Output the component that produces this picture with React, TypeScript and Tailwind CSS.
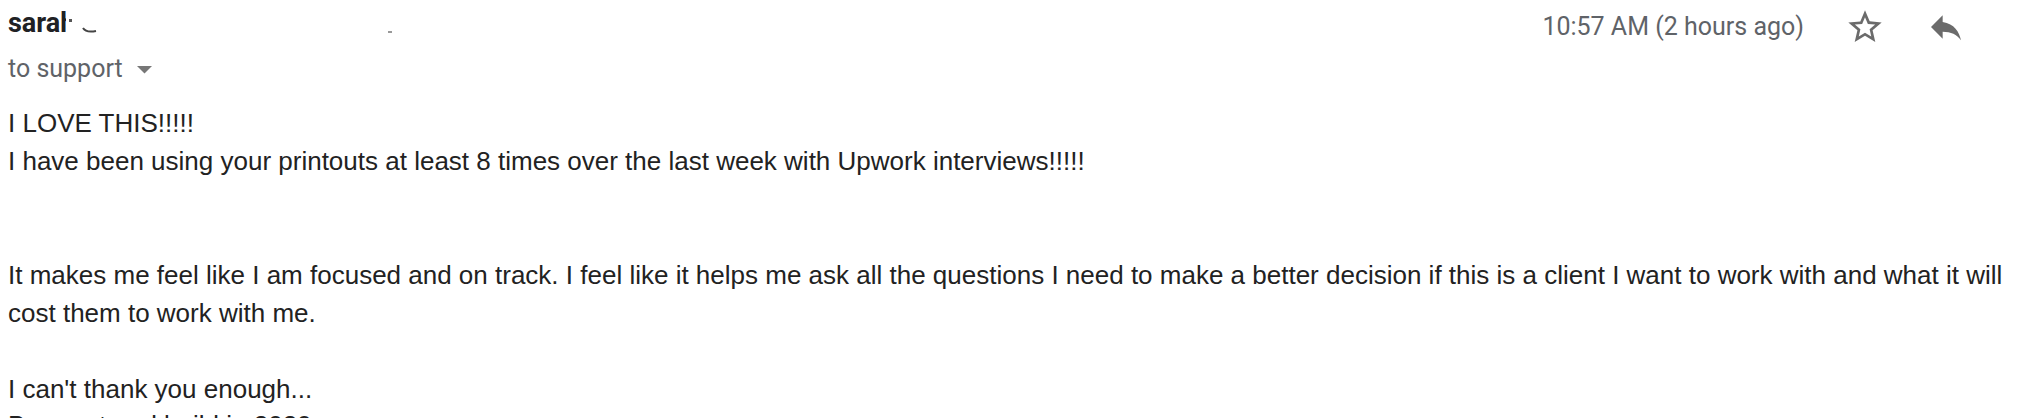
import React from "react";

function StarIcon() {
  return (
    <svg width="40" height="40" viewBox="0 0 24 24" fill="#6b6b6b">
      <path d="M22 9.24l-7.19-.62L12 2 9.19 8.63 2 9.24l5.46 4.73L5.82 21 12 17.27 18.18 21l-1.63-7.03L22 9.24zM12 15.4l-3.76 2.27 1-4.28-3.32-2.88 4.38-.38L12 6.1l1.71 4.04 4.38.38-3.32 2.88 1 4.28L12 15.4z" />
    </svg>
  );
}

function ReplyIcon() {
  return (
    <svg width="40" height="40" viewBox="0 0 24 24" fill="#6b6b6b">
      <path d="M10 9V5l-7 7 7 7v-4.1c5 0 8.5 1.6 11 5.1-1-5-4-10-11-11z" />
    </svg>
  );
}

export default function App() {
  return (
    <div className="w-[2021px] h-[418px] overflow-hidden bg-white">
      <div className="flex items-start justify-between pl-[8px] pr-[55px] pt-[4px]">
        <div className="flex flex-col font-['Roboto',sans-serif]">
          <div className="flex items-center h-[38px]">
            <span className="inline-block w-[58px] overflow-hidden whitespace-nowrap text-[27px] font-bold text-[#202124]">
              sarah
            </span>
            <span className="ml-[3px] mb-[6px] inline-block h-[3px] w-[3px] bg-[#555]" />
            <svg width="16" height="8" viewBox="0 0 16 8" className="ml-[10px] mt-[16px]">
              <path d="M1 1 Q4 6 14 4" stroke="#444" strokeWidth="2" fill="none" />
            </svg>
            <span className="ml-[290px] mt-[18px] inline-block h-[2px] w-[4px] bg-[#999]" />
          </div>
          <div className="flex items-center h-[38px] mt-[8px] text-[25px] text-[#5f6368]">
            <span>to support</span>
            <svg width="15" height="8" viewBox="0 0 15 8" className="ml-[14px] mt-[2px]">
              <path d="M0 0 L15 0 L7.5 7.5 Z" fill="#777" />
            </svg>
          </div>
        </div>
        <div className="flex items-center h-[46px] font-['Roboto',sans-serif]">
          <span className="text-[25px] text-[#5f6368]">10:57 AM (2 hours ago)</span>
          <span className="ml-[41px] flex items-center justify-center">
            <StarIcon />
          </span>
          <span className="ml-[41px] flex items-center justify-center">
            <ReplyIcon />
          </span>
        </div>
      </div>
      <div className="mt-[16px] pl-[8px] pr-[12px] font-['Liberation_Sans',Arial,sans-serif] text-[26px] leading-[38px] text-[#222222]">
        <div>I LOVE THIS!!!!!</div>
        <div>I have been using your printouts at least 8 times over the last week with Upwork interviews!!!!!</div>
        <div>&nbsp;</div>
        <div>&nbsp;</div>
        <div>
          It makes me feel like I am focused and on track. I feel like it helps me ask all the questions I need to make a better decision if this is a client I want to work with and what it will cost them to work with me.
        </div>
        <div>&nbsp;</div>
        <div>I can't thank you enough...</div>
        <div className="-mt-[2px]">Be great and build in 2020</div>
      </div>
    </div>
  );
}
